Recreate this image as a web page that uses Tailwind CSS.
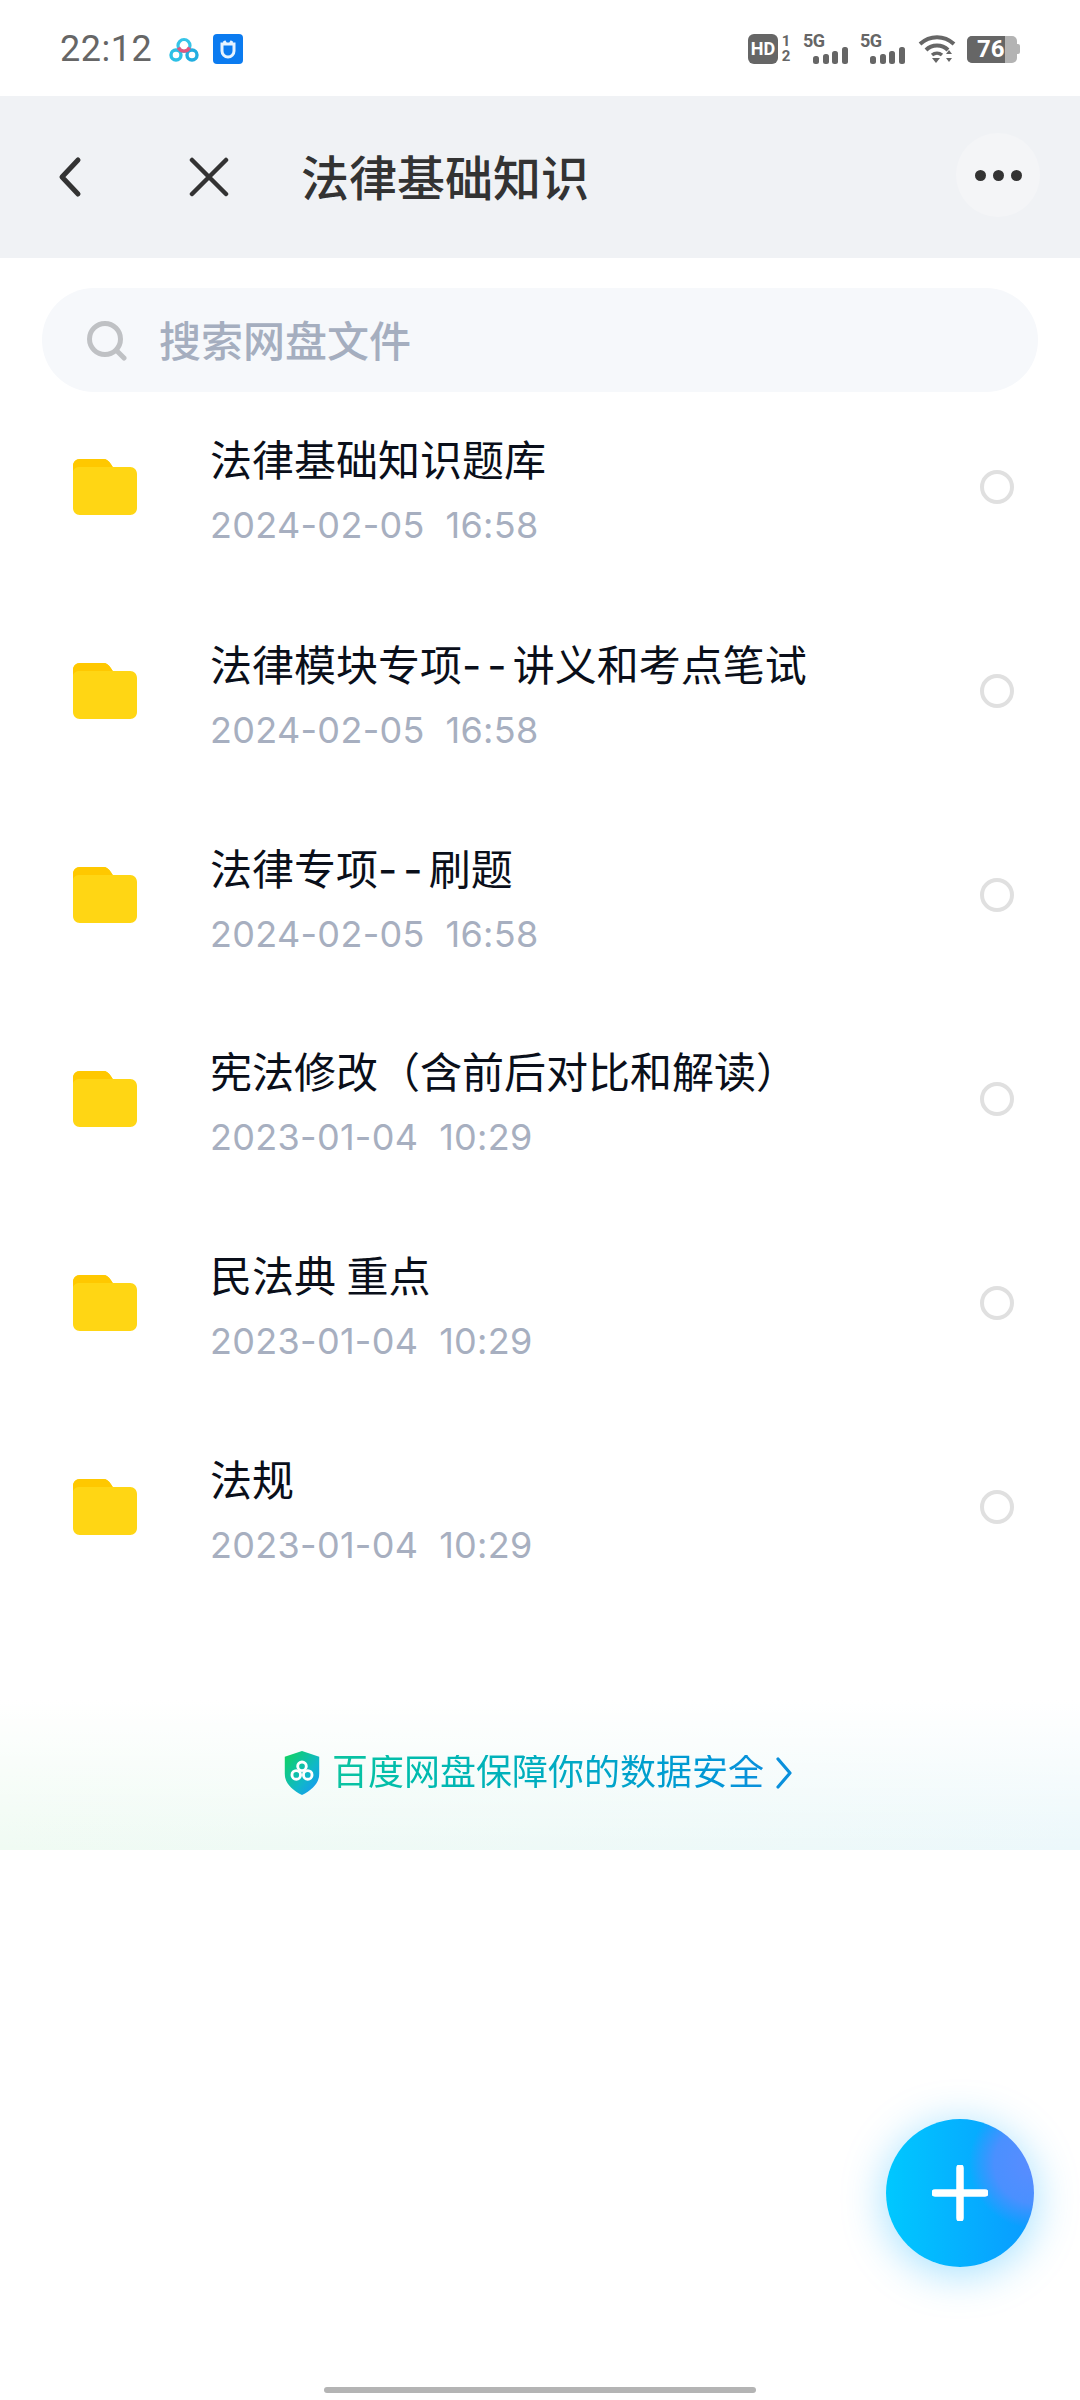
<!DOCTYPE html>
<html lang="zh-CN">
<head>
  <meta charset="UTF-8">
  <title>法律基础知识</title>
  <script src="https://cdn.jsdelivr.net/npm/@tailwindcss/browser@4"></script>
</head>
<body class="bg-white">
<div class="relative w-[1080px] h-[2400px] overflow-hidden bg-white font-['Roboto','Noto_Sans_CJK_SC',sans-serif]">

  <!-- status bar -->
  <div class="h-[96px] flex items-center justify-between pl-[60px] pr-[60px] pt-[2px]">
    <div class="flex items-center">
      <span class="text-[36px] leading-none text-[#666] tracking-[0.5px]">22:12</span>
      <svg class="ml-[17px]" width="30" height="25" viewBox="0 0 30 25" fill="none">
        <circle cx="15" cy="8.500" r="6" stroke="#35c4e8" stroke-width="3.200"/>
        <circle cx="7" cy="18" r="5" stroke="#2cc0e6" stroke-width="3.400"/>
        <circle cx="23" cy="18" r="5" stroke="#22aee0" stroke-width="3.400"/>
        <path d="M9.500 10.500a6 6 0 0 0 11 0" stroke="#e0587f" stroke-width="3.400"/>
      </svg>
      <svg class="ml-[14px]" width="30" height="30" viewBox="0 0 30 30">
        <rect width="30" height="30" rx="4" fill="#0b7bf0"/>
        <path d="M9 10h12v7a6 6 0 0 1-12 0z M11 7l2 3 M19 7l-2 3" fill="none" stroke="#e6f3ff" stroke-width="3"/>
      </svg>
    </div>
    <div class="flex items-center">
      <div class="flex items-center">
        <div class="w-[30px] h-[30px] rounded-[6px] bg-[#666] text-white text-[18px] font-bold leading-[30px] text-center">HD</div>
        <div class="ml-[2px] w-[12px] flex flex-col text-[#666] text-[15px] font-bold leading-[15px] text-center"><span>1</span><span>2</span></div>
      </div>
      <div class="ml-[11px] relative w-[46px] h-[30px]">
        <span class="absolute left-0 -top-[2px] text-[#666] text-[18px] font-bold leading-[18px] tracking-[-0.5px]">5G</span>
        <svg class="absolute left-[10px] top-[13px]" width="36" height="17" viewBox="0 0 36 17" fill="#666"><rect y="9" width="6" height="8" rx="2.500"/><rect x="10" y="7" width="6" height="10" rx="2.500"/><rect x="19" y="4" width="6" height="13" rx="2.500"/><rect x="29" y="0" width="6" height="17" rx="2.500"/></svg>
      </div>
      <div class="ml-[11px] relative w-[46px] h-[30px]">
        <span class="absolute left-0 -top-[2px] text-[#666] text-[18px] font-bold leading-[18px] tracking-[-0.5px]">5G</span>
        <svg class="absolute left-[10px] top-[13px]" width="36" height="17" viewBox="0 0 36 17" fill="#666"><rect y="9" width="6" height="8" rx="2.500"/><rect x="10" y="7" width="6" height="10" rx="2.500"/><rect x="19" y="4" width="6" height="13" rx="2.500"/><rect x="29" y="0" width="6" height="17" rx="2.500"/></svg>
      </div>
      <svg class="ml-[12px]" width="38" height="30" viewBox="0 0 38 30" fill="none">
        <path d="M2 10C12 1 26 1 36 10" stroke="#666" stroke-width="4"/>
        <path d="M8 16C14 10 24 10 30 16" stroke="#666" stroke-width="4"/>
        <path d="M14 21c3-2.500 7-2.500 10 0" stroke="#666" stroke-width="3.500"/>
        <path d="M14 24h8l-4 5z" fill="#666"/>
        <path d="M31 16l3 4h-6zM31 28l-3-4h6z" fill="#666"/>
      </svg>
      <div class="ml-[11px] flex items-center">
        <div class="relative w-[50px] h-[27px] rounded-[5px] bg-[#b3b3b3]">
          <div class="w-[38px] h-full rounded-l-[5px] bg-[#666]"></div>
          <span class="absolute left-[10px] top-0 text-white text-[24px] font-bold leading-[27px]">76</span>
        </div>
        <div class="w-[3px] h-[10px] rounded-r-[2px] bg-[#b3b3b3]"></div>
      </div>
    </div>
  </div>

  <!-- title bar -->
  <div class="h-[162px] bg-[#f0f2f5] flex items-center relative">
    <svg class="ml-[58px]" width="24" height="42" viewBox="0 0 24 42" fill="none"><path d="M20 4L4 21l16 17" stroke="#333" stroke-width="5" stroke-linecap="round" stroke-linejoin="round"/></svg>
    <svg class="ml-[107px]" width="40" height="40" viewBox="0 0 40 40" fill="none"><path d="M3 3l34 34M37 3L3 37" stroke="#333" stroke-width="4.500" stroke-linecap="round"/></svg>
    <h1 class="ml-[72px] pt-[5px] text-[48px] leading-none font-medium text-[#333]">法律基础知识</h1>
    <div class="absolute right-[40px] top-[37px] w-[84px] h-[84px] rounded-full bg-[#f4f5f7] flex items-center justify-center gap-[7px]">
      <span class="w-[11px] h-[11px] rounded-full bg-[#333]"></span>
      <span class="w-[11px] h-[11px] rounded-full bg-[#333]"></span>
      <span class="w-[11px] h-[11px] rounded-full bg-[#333]"></span>
    </div>
  </div>

  <!-- search -->
  <div class="mt-[30px] mx-[42px] h-[104px] rounded-[52px] bg-[#f6f8fb] flex items-center pl-[45px] pt-[2px]">
    <svg width="40" height="40" viewBox="0 0 40 40" fill="none"><circle cx="18" cy="18" r="15.500" stroke="#bfc1c4" stroke-width="5"/><path d="M30 30l7 7" stroke="#bfc1c4" stroke-width="5" stroke-linecap="round"/></svg>
    <span class="ml-[32px] pt-[4px] text-[42px] leading-none font-medium text-[#a5aebf]">搜索网盘文件</span>
  </div>

  <!-- files -->
  <ul class="-mt-[7px]">
    <li class="h-[204px] flex items-center pl-[73px] pr-[66px]">
      <svg width="64" height="56" viewBox="0 0 66 56" preserveAspectRatio="none"><path d="M7 0h24c4 0 6 2 8 5l2 3h18c4 0 7 3 7 7v34c0 4-3 7-7 7H7c-4 0-7-3-7-7V7c0-4 3-7 7-7z" fill="#ffd614"/><path d="M7 0h24c4 0 6 2 8 5l2 3H7c-4 0-7 2-7 5V7c0-4 3-7 7-7z" fill="#ffc800"/></svg>
      <div class="ml-[73px] flex-1 pt-[10px]">
        <div class="text-[42px] leading-[50px] text-[#0a0f1a]">法律基础知识题库</div>
        <div class="mt-[16px] font-['Inter',sans-serif] text-[36px] leading-[44px] tracking-[0.3px] text-[#a7afc0] whitespace-pre">2024-02-05  16:58</div>
      </div>
      <span class="w-[34px] h-[34px] rounded-full border-[4px] border-[#e0e0e0]"></span>
    </li>
    <li class="h-[204px] flex items-center pl-[73px] pr-[66px]">
      <svg width="64" height="56" viewBox="0 0 66 56" preserveAspectRatio="none"><path d="M7 0h24c4 0 6 2 8 5l2 3h18c4 0 7 3 7 7v34c0 4-3 7-7 7H7c-4 0-7-3-7-7V7c0-4 3-7 7-7z" fill="#ffd614"/><path d="M7 0h24c4 0 6 2 8 5l2 3H7c-4 0-7 2-7 5V7c0-4 3-7 7-7z" fill="#ffc800"/></svg>
      <div class="ml-[73px] flex-1 pt-[10px]">
        <div class="text-[42px] leading-[50px] text-[#0a0f1a]">法律模块专项<span class="font-['Inter',sans-serif] tracking-[6px]">--</span>讲义和考点笔试</div>
        <div class="mt-[16px] font-['Inter',sans-serif] text-[36px] leading-[44px] tracking-[0.3px] text-[#a7afc0] whitespace-pre">2024-02-05  16:58</div>
      </div>
      <span class="w-[34px] h-[34px] rounded-full border-[4px] border-[#e0e0e0]"></span>
    </li>
    <li class="h-[204px] flex items-center pl-[73px] pr-[66px]">
      <svg width="64" height="56" viewBox="0 0 66 56" preserveAspectRatio="none"><path d="M7 0h24c4 0 6 2 8 5l2 3h18c4 0 7 3 7 7v34c0 4-3 7-7 7H7c-4 0-7-3-7-7V7c0-4 3-7 7-7z" fill="#ffd614"/><path d="M7 0h24c4 0 6 2 8 5l2 3H7c-4 0-7 2-7 5V7c0-4 3-7 7-7z" fill="#ffc800"/></svg>
      <div class="ml-[73px] flex-1 pt-[10px]">
        <div class="text-[42px] leading-[50px] text-[#0a0f1a]">法律专项<span class="font-['Inter',sans-serif] tracking-[6px]">--</span>刷题</div>
        <div class="mt-[16px] font-['Inter',sans-serif] text-[36px] leading-[44px] tracking-[0.3px] text-[#a7afc0] whitespace-pre">2024-02-05  16:58</div>
      </div>
      <span class="w-[34px] h-[34px] rounded-full border-[4px] border-[#e0e0e0]"></span>
    </li>
    <li class="h-[204px] flex items-center pl-[73px] pr-[66px]">
      <svg width="64" height="56" viewBox="0 0 66 56" preserveAspectRatio="none"><path d="M7 0h24c4 0 6 2 8 5l2 3h18c4 0 7 3 7 7v34c0 4-3 7-7 7H7c-4 0-7-3-7-7V7c0-4 3-7 7-7z" fill="#ffd614"/><path d="M7 0h24c4 0 6 2 8 5l2 3H7c-4 0-7 2-7 5V7c0-4 3-7 7-7z" fill="#ffc800"/></svg>
      <div class="ml-[73px] flex-1 pt-[10px]">
        <div class="text-[42px] leading-[50px] text-[#0a0f1a]">宪法修改（含前后对比和解读）</div>
        <div class="mt-[16px] font-['Inter',sans-serif] text-[36px] leading-[44px] tracking-[0.3px] text-[#a7afc0] whitespace-pre">2023-01-04  10:29</div>
      </div>
      <span class="w-[34px] h-[34px] rounded-full border-[4px] border-[#e0e0e0]"></span>
    </li>
    <li class="h-[204px] flex items-center pl-[73px] pr-[66px]">
      <svg width="64" height="56" viewBox="0 0 66 56" preserveAspectRatio="none"><path d="M7 0h24c4 0 6 2 8 5l2 3h18c4 0 7 3 7 7v34c0 4-3 7-7 7H7c-4 0-7-3-7-7V7c0-4 3-7 7-7z" fill="#ffd614"/><path d="M7 0h24c4 0 6 2 8 5l2 3H7c-4 0-7 2-7 5V7c0-4 3-7 7-7z" fill="#ffc800"/></svg>
      <div class="ml-[73px] flex-1 pt-[10px]">
        <div class="text-[42px] leading-[50px] text-[#0a0f1a]">民法典 重点</div>
        <div class="mt-[16px] font-['Inter',sans-serif] text-[36px] leading-[44px] tracking-[0.3px] text-[#a7afc0] whitespace-pre">2023-01-04  10:29</div>
      </div>
      <span class="w-[34px] h-[34px] rounded-full border-[4px] border-[#e0e0e0]"></span>
    </li>
    <li class="h-[204px] flex items-center pl-[73px] pr-[66px]">
      <svg width="64" height="56" viewBox="0 0 66 56" preserveAspectRatio="none"><path d="M7 0h24c4 0 6 2 8 5l2 3h18c4 0 7 3 7 7v34c0 4-3 7-7 7H7c-4 0-7-3-7-7V7c0-4 3-7 7-7z" fill="#ffd614"/><path d="M7 0h24c4 0 6 2 8 5l2 3H7c-4 0-7 2-7 5V7c0-4 3-7 7-7z" fill="#ffc800"/></svg>
      <div class="ml-[73px] flex-1 pt-[10px]">
        <div class="text-[42px] leading-[50px] text-[#0a0f1a]">法规</div>
        <div class="mt-[16px] font-['Inter',sans-serif] text-[36px] leading-[44px] tracking-[0.3px] text-[#a7afc0] whitespace-pre">2023-01-04  10:29</div>
      </div>
      <span class="w-[34px] h-[34px] rounded-full border-[4px] border-[#e0e0e0]"></span>
    </li>
  </ul>

  <!-- security banner -->
  <div class="mt-[91px] h-[150px] bg-[linear-gradient(180deg,#ffffff,transparent),linear-gradient(90deg,#f0fbf3,#ecf8fb)] flex items-center justify-center pr-[4px] pb-[4px]">
    <svg width="36" height="44" viewBox="0 0 36 46">
      <defs><linearGradient id="shield" x1="0" y1="0" x2="1" y2="1"><stop offset="0" stop-color="#10d45a"/><stop offset="0.6" stop-color="#10b8c8"/><stop offset="1" stop-color="#1a90ff"/></linearGradient></defs>
      <path d="M18 0l18 6v18c0 10-8 17-18 22C8 41 0 34 0 24V6z" fill="url(#shield)"/>
      <g fill="none" stroke="#fff" stroke-width="3"><circle cx="18" cy="16" r="4.500"/><circle cx="12" cy="25" r="4.500"/><circle cx="24" cy="25" r="4.500"/></g>
    </svg>
    <span class="ml-[12px] text-[36px] leading-none bg-gradient-to-r from-[#0cc4a0] to-[#0a90dc] bg-clip-text text-transparent">百度网盘保障你的数据安全</span>
    <svg class="ml-[12px]" width="16" height="32" viewBox="0 0 16 32" fill="none"><path d="M2 2l12 14L2 30" stroke="#0a90dc" stroke-width="3.200" stroke-linecap="round" stroke-linejoin="round"/></svg>
  </div>

  <!-- add button -->
  <div class="absolute left-[886px] top-[2119px] w-[148px] h-[148px] rounded-full bg-[radial-gradient(circle_at_100%_30%,#5a8cff_0%,#4a90ff_22%,transparent_36%),linear-gradient(90deg,#00c8ff,#0a9aff)] shadow-[0_6px_44px_rgba(0,170,255,0.38)] flex items-center justify-center">
    <svg width="56" height="56" viewBox="0 0 56 56" fill="none"><path d="M28 3v50M3 28h50" stroke="#fff" stroke-width="7.500" stroke-linecap="round"/></svg>
  </div>

  <!-- home indicator -->
  <div class="absolute left-[324px] top-[2387px] w-[432px] h-[6px] rounded-full bg-[#b4b4b4]"></div>
</div>
</body>
</html>
